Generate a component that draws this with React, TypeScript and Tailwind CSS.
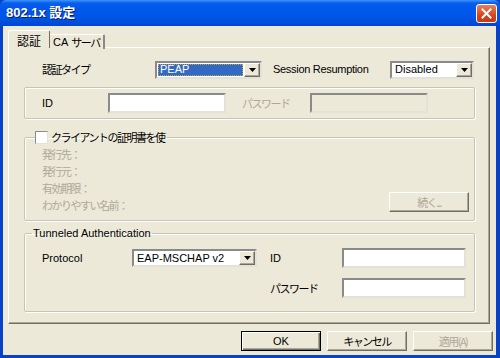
import React from 'react';

const font = "font-['Liberation_Sans','Noto_Sans_CJK_JP',sans-serif]";
const jp = "font-['Noto_Sans_CJK_JP',sans-serif] text-[11px] tracking-[-1.5px]";
const sunken = 'border-2 border-t-[#8a8a8a] border-l-[#8a8a8a] border-b-[#e4e2d8] border-r-[#e4e2d8]';
const raised = 'border border-t-white border-l-white border-b-[#716F64] border-r-[#716F64] shadow-[inset_-1px_-1px_0_#ACA899]';

const Arrow = () => (
  <svg width="7" height="4" viewBox="0 0 7 4">
    <path d="M0 0h7L3.5 4z" fill="#000" />
  </svg>
);

const Combo = ({ value, width, selected }: { value: string; width: string; selected?: boolean }) => (
  <div className={`${width} h-[18px] ${sunken} bg-white flex items-stretch shrink-0`}>
    <div className="flex-1 p-[1px] flex">
      <div
        className={`flex-1 flex items-center pl-[2px] text-[11px] whitespace-nowrap ${
          selected ? 'bg-[#316AC5] text-white outline outline-1 outline-dotted outline-[#c8a040] -outline-offset-1' : 'text-black'
        }`}
      >
        {value}
      </div>
    </div>
    <div className={`w-[16px] bg-[#ECE9D8] ${raised} flex items-center justify-center`}>
      <Arrow />
    </div>
  </div>
);

const Input = ({ width, disabled }: { width: string; disabled?: boolean }) => (
  <div className={`${width} h-[20px] shrink-0 ${sunken} ${disabled ? 'bg-[#ECE9D8]' : 'bg-white'}`} />
);

const Button = ({ label, focus, disabled, className = '' }: { label: string; focus?: boolean; disabled?: boolean; className?: string }) => (
  <div
    className={`w-[80px] h-[20px] flex items-center justify-center bg-[#ECE9D8] ${
      focus ? 'border border-black shadow-[inset_1px_1px_0_white,inset_-1px_-1px_0_#716F64,inset_-2px_-2px_0_#ACA899]' : raised
    } ${disabled ? 'text-[#ACA899]' : 'text-black'} ${className}`}
  >
    {label}
  </div>
);

const groupBox = 'border border-[#C8C4B4] rounded-[2px] shadow-[inset_1px_1px_0_white,1px_1px_0_white]';

export default function App() {
  return (
    <div className={`w-[500px] h-[358px] flex flex-col bg-[#0842C8] ${font} text-[11px] text-black select-none`}>
      {/* Title bar */}
      <div className="h-[26px] flex items-center justify-between pl-[6px] pr-[3px] rounded-t-[6px] bg-[linear-gradient(to_bottom,#3D95FF_0px,#0A5FE8_3px,#0058EE_8px,#0055E5_18px,#0046D2_26px)]">
        <span className="text-white font-bold text-[13px] [text-shadow:1px_1px_0_#0A1E6A]">
          802.1x 設定
        </span>
        <div className="w-[21px] h-[19px] rounded-[3px] border border-white bg-[linear-gradient(to_bottom,#E9805F,#D7461F_60%,#C23A18)] flex items-center justify-center">
          <svg width="11" height="11" viewBox="0 0 11 11">
            <path d="M1.5 1.5l8 8M9.5 1.5l-8 8" stroke="#fff" strokeWidth="2" strokeLinecap="square" />
          </svg>
        </div>
      </div>

      {/* Body */}
      <div className="flex-1 ml-[3px] mr-[4px] mb-[3px] bg-[#ECE9D8] flex flex-col pl-[5px] pr-[6px] pt-[4px]">
        {/* Tabs */}
        <div className="flex items-end h-[18px] relative z-10">
          <div className={`w-[42px] h-[18px] bg-[#ECE9D8] border-t border-l border-white border-r border-r-[#716F64] rounded-t-[2px] flex items-start justify-center pt-[1px] ${jp} text-[12px] tracking-[0px]`}>
            認証
          </div>
          <div className="w-[55px] h-[15px] -mb-[1px] bg-[#ECE9D8] border-t border-white border-r-2 border-r-[#8d8b80] flex items-center pl-[3px] rounded-tr-[2px] whitespace-nowrap">
            CA<span className={`ml-[3px] ${jp}`}>サーバ</span>
          </div>
        </div>

        {/* Panel */}
        <div className="-mt-[1px] h-[277px] border border-t-white border-l-white border-r-[#716F64] border-b-[#716F64] shadow-[inset_-1px_-1px_0_#ACA899] px-[15px] pt-[13px]">
          {/* Row 1 */}
          <div className="flex items-center h-[17px]">
            <span className={`w-[131px] shrink-0 pl-[18px] ${jp}`}>認証タイプ</span>
            <Combo value="PEAP" width="w-[107px]" selected />
            <span className="ml-[11px] w-[117px] shrink-0 whitespace-nowrap tracking-[-0.3px]">Session Resumption</span>
            <Combo value="Disabled" width="w-[84px]" />
          </div>

          {/* ID group */}
          <div className={`mt-[9px] w-[451px] h-[32px] ${groupBox} flex items-center pl-[17px]`}>
            <span className="w-[66px] shrink-0">ID</span>
            <Input width="w-[118px]" />
            <span className={`ml-[16px] w-[68px] shrink-0 text-[#ACA899] ${jp}`}>パスワード</span>
            <Input width="w-[118px]" disabled />
          </div>

          {/* Cert group */}
          <fieldset className={`mt-[11px] w-[451px] h-[91px] ${groupBox}`}>
            <legend className="ml-[10px] flex items-center h-[14px] pr-[2px]">
              <span className={`w-[13px] h-[13px] bg-white ${sunken} border-[1px]`} />
              <span className={`ml-[3px] ${jp}`}>クライアントの証明書を使</span>
            </legend>
            <div className="flex justify-between items-end pt-[2px] pl-[17px] pr-[5px]">
              <div className={`flex flex-col text-[#ACA899] ${jp} leading-[17px]`}>
                <span>発行先：</span>
                <span>発行元：</span>
                <span>有効期限：</span>
                <span>わかりやすい名前：</span>
              </div>
              <Button label="続く..." disabled className={`h-[19px] mb-[2px] ${jp}`} />
            </div>
          </fieldset>

          {/* Tunneled */}
          <fieldset className={`mt-[5px] w-[451px] h-[86px] ${groupBox}`}>
            <legend className="ml-[7px] px-[1px] h-[14px] flex items-center text-[11px]">Tunneled Authentication</legend>
            <div className="flex pt-[8px] pl-[17px]">
              <div className="flex items-center h-[20px]">
                <span className="w-[90px] shrink-0">Protocol</span>
                <Combo value="EAP-MSCHAP v2" width="w-[125px]" />
              </div>
              <div className="ml-[13px] grid grid-cols-[72px_124px] gap-y-[10px] items-center">
                <span>ID</span>
                <Input width="w-[124px]" />
                <span className={jp}>パスワード</span>
                <Input width="w-[124px]" />
              </div>
            </div>
          </fieldset>
        </div>

        {/* Buttons */}
        <div className="mt-[7px] flex justify-end gap-[6px] -mr-[3px]">
          <Button label="OK" focus />
          <Button label="キャンセル" className={jp} />
          <Button label="適用(A)" disabled className={jp} />
        </div>
      </div>
    </div>
  );
}
